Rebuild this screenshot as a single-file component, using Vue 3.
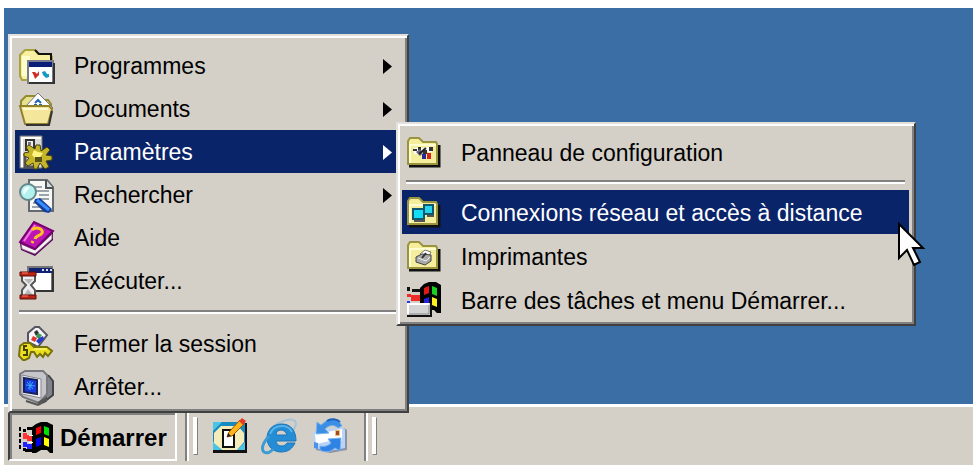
<template>
  <div class="screen">
    <main class="desktop"></main>

    <footer class="taskbar">
      <button class="start-button" type="button" :aria-expanded="menuOpen" @click="menuOpen = !menuOpen">
        <svg class="flag" viewBox="0 0 34 32">
          <path d="M0 5h2v4H0zM0 11h2v4H0zM0 17h2v4H0zM0 23h2v4H0zM4 7h3v3H4zM4 26h3v3H4zM8 5h6v3H8zM6 27h8v3H6z" fill="#000" />
          <path d="M4 11h4v2h6v6H8v-2H4z" fill="#f33" />
          <path d="M4 20h4v2h6v5H8v-2H4z" fill="#22f" />
          <path d="M13 5l4-3 5-2h6l6 3v28h-3l-3-3h-6l-5 3h-4z" fill="#000" />
          <path d="M17 6l5-2v7l-5 2z" fill="#f00000" />
          <path d="M25 4l5 2v8l-5-2z" fill="#00e000" />
          <path d="M17 17l5-2v8l-5 2z" fill="#0000f0" />
          <path d="M25 15l5 2v8l-5-2z" fill="#ffff00" />
          <path d="M10 13h4v1h-4zM10 20h4v1h-4z" fill="#fff" />
        </svg>
        <span>Démarrer</span>
      </button>

      <div class="toolbar">
        <button class="quick" type="button" aria-label="Bureau">
          <svg viewBox="0 0 36 36">
            <path d="M1 4h32v30H1z" fill="#168bc0" />
            <path d="M1 4h9L1 13zM24 33l9-9v9zM1 23l9 10H1z" fill="#4bc5e7" />
            <path d="M9 8h17l6 7v9l-7 8H10l-8-7V15z" fill="#f5edb9" />
            <path d="M1 32h32V5h2v30H1z" fill="#111" />
            <path d="M11 12h11v17H11z" fill="#fff" stroke="#111" stroke-width="2" />
            <path d="M15 19l2-5L28 2l4 4-12 12z" fill="#ffb51b" stroke="#9b5300" />
            <path d="M27 3l3-3 4 3-3 4z" fill="#e33b24" />
            <path d="M15 19l1-4 3 3z" fill="#222" />
          </svg>
        </button>
        <button class="quick" type="button" aria-label="Internet">
          <svg viewBox="0 0 36 36">
            <path d="M8 11C18 2 30 0 33 3c2 3 0 8-4 12" fill="none" stroke="#a5c4d8" stroke-width="2" />
            <path d="M33 25C30 31 26 34 19 34C11 34 5 28 5 20C5 12 11 6 20 6C29 6 34 13 34 23H14C14 26 17 28 20 28C23 28 24 26 25 25zM14 17H25C24 14 22 12 19 12C16 12 14 14 14 17z" fill="#248dd5" fill-rule="evenodd" stroke="#1f74b8" />
            <path d="M8 16c2-5 6-8 12-8 5 0 8 2 10 6" fill="none" stroke="#55b4ea" stroke-width="2" />
            <path d="M7 18C1 25-1 31 2 34c3 2 7 0 9-3" fill="none" stroke="#3d9bd4" stroke-width="3" />
          </svg>
        </button>
        <button class="quick" type="button" aria-label="Courrier">
          <svg viewBox="0 0 36 36">
            <path d="M4 16l28-6 3 2v20l-17 3-14-3z" fill="#8c93a4" />
            <path d="M1 14l9-3 21-1 2 1v19l-16 3-15-3z" fill="#b9d4f8" />
            <path d="M3 15l12-1 15-3v12H18L4 26z" fill="#fff" />
            <path d="M23 12h5v6h-5z" fill="#efc07b" />
            <path d="M24 13h3v4h-3z" fill="#a04a22" />
            <path d="M30 8C27 2 20-1 14 3L9 7 5 4 4 16l13-1-4-4c4-4 9-5 13-1z" fill="#3b8ee2" stroke="#7bb2ee" />
            <path d="M28 4c-3-3-9-4-13-1" fill="none" stroke="#1c62bb" stroke-width="2" />
            <path d="M2 24l4 1v6l-4-1z" fill="#4b93ea" />
            <path d="M8 32c5 3 11 2 15-2l5 3 1-13-13 1 3 4c-3 3-7 4-11 3z" fill="#2f83e4" stroke="#7bb2ee" />
          </svg>
        </button>
      </div>
      <div class="toolbar"></div>
    </footer>

    <nav v-if="menuOpen" class="menu start-menu" aria-label="Menu Démarrer">
      <template v-for="item in items" :key="item.label">
        <hr v-if="item.divided">
        <div class="entry">
          <button class="item" :class="{ active: item.label === opened }" type="button" @click="toggle(item)">
            <svg class="icon" viewBox="0 0 36 36">
              <g v-if="item.icon === 'programs'">
                <path d="M2 6l3-3 2-2h10l3 4h12l2 3v23H4l-2-4z" fill="#f6f0a0" stroke="#aaa340" stroke-width="2" />
                <path d="M17 1l4 4h12v7" fill="none" stroke="#111" stroke-width="2" />
                <path d="M4 7h8v20H4z" fill="#fffdc9" />
                <path d="M10 12h25v22H10z" fill="#fff" stroke="#777b8c" stroke-width="2" />
                <path d="M11 13h23v5H11z" fill="#0a1e79" />
                <path d="M11 34h25V14" fill="none" stroke="#333" stroke-width="2" />
                <path d="M14 23h3l2 2 2-3v4l-4 4-1-3z" fill="#d02d21" />
                <path d="M24 23l3-1 2 3h2v3l-3 1-3-3z" fill="#139cc3" />
              </g>
              <g v-else-if="item.icon === 'documents'">
                <path d="M3 15V9l5-5h9l4 4h9l3 4v8" fill="#e6e190" stroke="#918c2e" stroke-width="2" />
                <path d="M8 14L20 1l15 15-8 7z" fill="#fff" stroke="#777" stroke-width="1" />
                <path d="M17 11l3-3 3 3M16 13h3m2 0h3" fill="none" stroke="#2868ad" stroke-width="2" />
                <path d="M2 14h29l3 3-4 15H7z" fill="#f4e69b" stroke="#91832b" stroke-width="2" />
                <path d="M4 16h26v2H6z" fill="#fffcd0" />
                <path d="M8 33h23l3-14" fill="none" stroke="#333" stroke-width="2" />
              </g>
              <g v-else-if="item.icon === 'settings'">
                <path d="M2 1h22v32H2z" fill="#d9d9d5" stroke="#777" />
                <path d="M3 2h20v2H5v28H3z" fill="#fff" />
                <path d="M8 5h8v10H8z" fill="#eee" stroke="#333" stroke-width="2" />
                <path d="M10 7h3v3h-3z" fill="#777" />
                <path d="M7 19v13h14" fill="none" stroke="#555" stroke-width="3" />
                <path d="M18 10h4l1 6 6-4 3 3-4 5 6 1v4l-6 1 3 6-4 2-5-6-3 6h-3l-1-6-5 3-3-3 4-5-5-2v-3l5-1-3-5 3-2 6 4z" fill="#c5b529" stroke="#494110" />
                <path d="M16 15l4 2 5 1-3 4-5 1-3-3z" fill="#fff580" />
                <path d="M17 22h7v5h-7z" fill="#59511b" />
              </g>
              <g v-else-if="item.icon === 'search'">
                <path d="M11 2h18l6 7v24H11z" fill="#f7f7f3" stroke="#646b70" stroke-width="2" />
                <path d="M28 2v8h7" fill="#d9dfdf" stroke="#4d5254" stroke-width="2" />
                <path d="M14 9h10M18 13h13M21 17h10M22 21h9M15 25h5M14 29h8" stroke="#9ba3aa" stroke-width="2" />
                <path d="M17 21l5-1 12 11-3 4-5-1-10-10z" fill="#153d9b" />
                <path d="M19 22l12 10" stroke="#358fff" stroke-width="3" />
                <circle cx="10" cy="14" r="8" fill="#b2f1ed" stroke="#65888d" stroke-width="2" />
                <path d="M5 14c0-4 3-6 7-5l-6 8z" fill="#effffc" />
              </g>
              <g v-else-if="item.icon === 'help'">
                <path d="M2 22L16 1l19 9v9L17 35 3 29z" fill="#530052" />
                <path d="M3 23l14 6 17-16v5L17 33 4 28z" fill="#f5f2f4" stroke="#8d5b8b" />
                <path d="M2 21L16 1l19 9-18 18z" fill="#bd15b5" stroke="#77006f" stroke-width="2" />
                <path d="M6 20L17 4" stroke="#ed78df" stroke-width="2" />
                <path d="M14 9c4-4 12-1 10 3-1 3-6 2-7 6M15 20l-1 2" fill="none" stroke="#ffc51f" stroke-width="3" />
              </g>
              <g v-else-if="item.icon === 'run'">
                <path d="M10 3h24v24H10z" fill="#fff" stroke="#777" stroke-width="2" />
                <path d="M11 4h23v5H11z" fill="#102176" />
                <path d="M24 5h2v2h-2zM28 5h2v2h-2zM32 5h2v2h-2z" fill="#ddd" />
                <path d="M13 27h22V5" fill="none" stroke="#333" stroke-width="2" />
                <path d="M4 11h13v6l-4 4 4 5v6H4v-6l4-5-4-4z" fill="#eee" stroke="#555" stroke-width="2" />
                <path d="M6 15h9l-4 5zM6 31l4-6 5 6z" fill="#b8b8b8" />
                <path d="M2 8h16v4H2zM2 31h16v4H2z" fill="#bc2416" stroke="#5c0d08" />
                <path d="M4 9h6M4 32h6" stroke="#ff826e" />
              </g>
              <g v-else-if="item.icon === 'logoff'">
                <path d="M10 12V6l7-6h4l8 8-9 12-10-5z" fill="#f5f5fa" stroke="#55555e" stroke-width="2" />
                <path d="M16 5l3-2 2 3-3 3z" fill="#333" />
                <path d="M15 9l4 2-2 4-4-2z" fill="#e0352b" />
                <path d="M20 6l4 2-3 4-3-2z" fill="#3a9a48" />
                <path d="M21 11l4-2 1 3-5 5-3-3z" fill="#273bcb" />
                <path d="M2 19l4-3h6l4 4h13l5 4-4 5-3-3-2 4-3-3-3 3-3-5h-3l-2 6-4 2H5l-4-4z" fill="#ecdf20" stroke="#77700c" stroke-width="2" />
                <path d="M9 19H6v4h3v5H5" fill="none" stroke="#464106" stroke-width="2" />
                <path d="M16 22h13" stroke="#ffff8c" />
              </g>
              <g v-else>
                <path d="M21 2l10 4 4 5v14l-9 7-7-5z" fill="#82828a" stroke="#44444b" stroke-width="2" />
                <path d="M2 4l5-3h18l4 4v19l-8 9L5 27l-3-3z" fill="#c6c6ca" stroke="#77777d" stroke-width="2" />
                <path d="M4 5l19 4v19L4 24z" fill="#f1f1f3" stroke="#85858b" />
                <path d="M6 8l13 2v14L6 22z" fill="#1638dc" stroke="#17205b" stroke-width="2" />
                <path d="M12 11v9M8 15l9 1M9 12l6 7M15 12l-5 7" stroke="#39a9ff" />
                <path d="M20 33l8-5v3l-8 4-12-4" fill="none" stroke="#555" stroke-width="2" />
              </g>
            </svg>
            <span>{{ item.label }}</span>
            <svg v-if="item.more" class="arrow" viewBox="0 0 9 15"><path d="M0 0l9 7.5L0 15z" fill="currentColor" /></svg>
          </button>

          <div v-if="item.children && item.label === opened" class="menu submenu">
            <template v-for="child in item.children" :key="child.label">
              <hr v-if="child.divided">
              <div class="entry">
                <button class="item" :class="{ active: child.label === selected }" type="button" @click="selected = child.label">
                  <svg class="icon" viewBox="0 0 36 36">
                    <g v-if="child.icon !== 'taskbar'">
                      <path d="M4 31h30V10" fill="none" stroke="#111" stroke-width="3" />
                      <path d="M3 6l2-3h9l4 4h13l1 2v20H3z" fill="#f5ef9d" stroke="#99943d" stroke-width="2" />
                      <path d="M5 28V10h26" fill="none" stroke="#fffdd2" stroke-width="2" />
                    </g>
                    <g v-if="child.icon === 'panel'">
                      <path d="M9 13h9v6H9zM20 12h7v5h-7z" fill="#fff" />
                      <path d="M8 14h4v2H8zM13 12h3v3h-3zM18 15h4v4h-4zM24 12h4v4h-4z" fill="#333" />
                      <path d="M11 17l4-3 3 4-3 3z" fill="#66627f" />
                      <path d="M17 19h4v5h-4z" fill="#222c9c" />
                      <path d="M22 18h4v6h-4z" fill="#d7281e" />
                      <path d="M14 19l7-6" stroke="#222" stroke-width="2" />
                    </g>
                    <g v-else-if="child.icon === 'network'">
                      <path d="M19 10h9v9h-9z" fill="#25d4ea" stroke="#14566d" stroke-width="2" />
                      <path d="M8 14h11v10H8z" fill="#12dff5" stroke="#14566d" stroke-width="2" />
                      <path d="M9 26h10v-2M22 21h7" fill="none" stroke="#555" stroke-width="2" />
                    </g>
                    <g v-else-if="child.icon === 'printer'">
                      <path d="M15 15l5-4 6 2-3 6z" fill="#fff" stroke="#777" />
                      <path d="M11 18l6-3 9 1v6l-6 4-9-3z" fill="#aaa" stroke="#444" />
                      <path d="M13 19l8 3 4-4" fill="none" stroke="#eee" />
                      <path d="M17 19l4-5" stroke="#333" stroke-width="2" />
                    </g>
                    <g v-else>
                      <path d="M2 4h3v4H2zM7 6h8v3H7z" fill="#111" />
                      <path d="M2 11h4v3H2zM6 12h10v6H6z" fill="#ee2b27" />
                      <path d="M2 18h3v2H2z" fill="#2938ed" />
                      <path d="M15 5l4-4 5-2h7l5 3v28h-4l-3-3h-5l-6 3h-3z" fill="#000" />
                      <path d="M19 5l5-2v7l-5 2z" fill="#e61616" />
                      <path d="M27 3l5 2v8l-5-2z" fill="#16d122" />
                      <path d="M19 16l5-2v8l-5 2z" fill="#2222df" />
                      <path d="M27 14l5 2v8l-5-2z" fill="#fff021" />
                      <path d="M2 20h25v14H2z" fill="#111" />
                      <path d="M2 20h23v12H2z" fill="#d4d4d4" />
                      <path d="M3 31V21h21" fill="none" stroke="#fff" stroke-width="2" />
                      <path d="M4 31h20V22" fill="none" stroke="#888" />
                    </g>
                  </svg>
                  <span>{{ child.label }}</span>
                </button>
                <svg v-if="child.label === selected" class="pointer" viewBox="0 0 26 46">
                  <path d="M1 2v34l8-8 7 15 6-3-7-14h10z" fill="#fff" stroke="#000" stroke-width="2" />
                </svg>
              </div>
            </template>
          </div>
        </div>
      </template>
    </nav>
  </div>
</template>

<script setup>
import { ref } from 'vue';

const menuOpen = ref(true);
const opened = ref('Paramètres');
const selected = ref('Connexions réseau et accès à distance');

const items = [
  { label: 'Programmes', icon: 'programs', more: true },
  { label: 'Documents', icon: 'documents', more: true },
  {
    label: 'Paramètres',
    icon: 'settings',
    more: true,
    children: [
      { label: 'Panneau de configuration', icon: 'panel' },
      { label: 'Connexions réseau et accès à distance', icon: 'network', divided: true },
      { label: 'Imprimantes', icon: 'printer' },
      { label: 'Barre des tâches et menu Démarrer...', icon: 'taskbar' },
    ],
  },
  { label: 'Rechercher', icon: 'search', more: true },
  { label: 'Aide', icon: 'help' },
  { label: 'Exécuter...', icon: 'run' },
  { label: 'Fermer la session', icon: 'logoff', divided: true },
  { label: 'Arrêter...', icon: 'shutdown' },
];

// Open or close the submenu of an entry
const toggle = (item) => {
  opened.value = opened.value === item.label ? '' : item.label;
};
</script>

<style>
body {
  margin: 0;
  background: #fff;
}
</style>

<style scoped>
.screen {
  position: relative;
  display: flex;
  flex-direction: column;
  box-sizing: border-box;
  min-height: 100vh;
  padding: 8px 3px 2px 4px;
  font-family: "Liberation Sans", Arial, sans-serif;
  font-size: 23px;
  color: #000;
}

button {
  margin: 0;
  border: 0;
  background: none;
  color: inherit;
  font: inherit;
}

svg {
  display: block;
  flex: none;
  overflow: visible;
}

.desktop {
  flex: 1;
  background: #3a6ea5;
}

.taskbar {
  display: flex;
  box-sizing: border-box;
  height: 61px;
  padding: 4px;
  border-top: 3px solid #fff;
  background: #d4d0c8;
}

.start-button {
  display: flex;
  align-items: center;
  gap: 7px;
  margin-right: 8px;
  padding: 4px 8px 0 9px;
  border: 2px solid;
  border-color: #404040 #fff #fff #404040;
  box-shadow: inset 2px 2px #808080;
  font-size: 24px;
  font-weight: bold;
}

.flag {
  width: 34px;
  height: 32px;
}

.toolbar {
  display: flex;
  align-items: center;
  gap: 14px;
  padding-right: 16px;
  border-left: 2px solid #808080;
  box-shadow: inset 2px 0 #fff;
}

.toolbar::before {
  content: '';
  width: 3px;
  height: 36px;
  margin-left: 6px;
  border: 1px solid;
  border-color: #fff #808080 #808080 #fff;
  background: #fff;
}

.quick {
  padding: 0;
}

.quick svg {
  width: 36px;
  height: 36px;
}

.menu {
  position: absolute;
  border: 2px solid;
  border-color: #e4e1dc #404040 #404040 #e4e1dc;
  background: #d4d0c8;
  box-shadow: inset 2px 2px #fff, inset -2px -2px #808080;
}

.start-menu {
  left: 8px;
  bottom: 54px;
  min-width: 387px;
  padding: 8px 5px 3px;
}

.submenu {
  left: 381px;
  top: -8px;
  min-width: 507px;
  padding: 6px 5px 2px 4px;
}

.menu hr {
  height: 2px;
  margin: 8px 4px;
  border: 0;
  border-top: 2px solid #808080;
  background: #fff;
}

.submenu hr {
  margin: 6px 4px;
}

.entry {
  position: relative;
}

.item {
  display: flex;
  align-items: center;
  gap: 20px;
  width: 100%;
  height: 43px;
  padding: 2px 10px 0 3px;
  text-align: left;
  white-space: nowrap;
}

.submenu .item {
  height: 44px;
}

.item.active {
  background: #0a246a;
  color: #fff;
}

.icon {
  width: 36px;
  height: 36px;
}

.arrow {
  width: 9px;
  height: 15px;
  margin-left: auto;
}

.pointer {
  position: absolute;
  z-index: 1;
  right: -15px;
  top: 32px;
  width: 26px;
  height: 46px;
  pointer-events: none;
}
</style>
